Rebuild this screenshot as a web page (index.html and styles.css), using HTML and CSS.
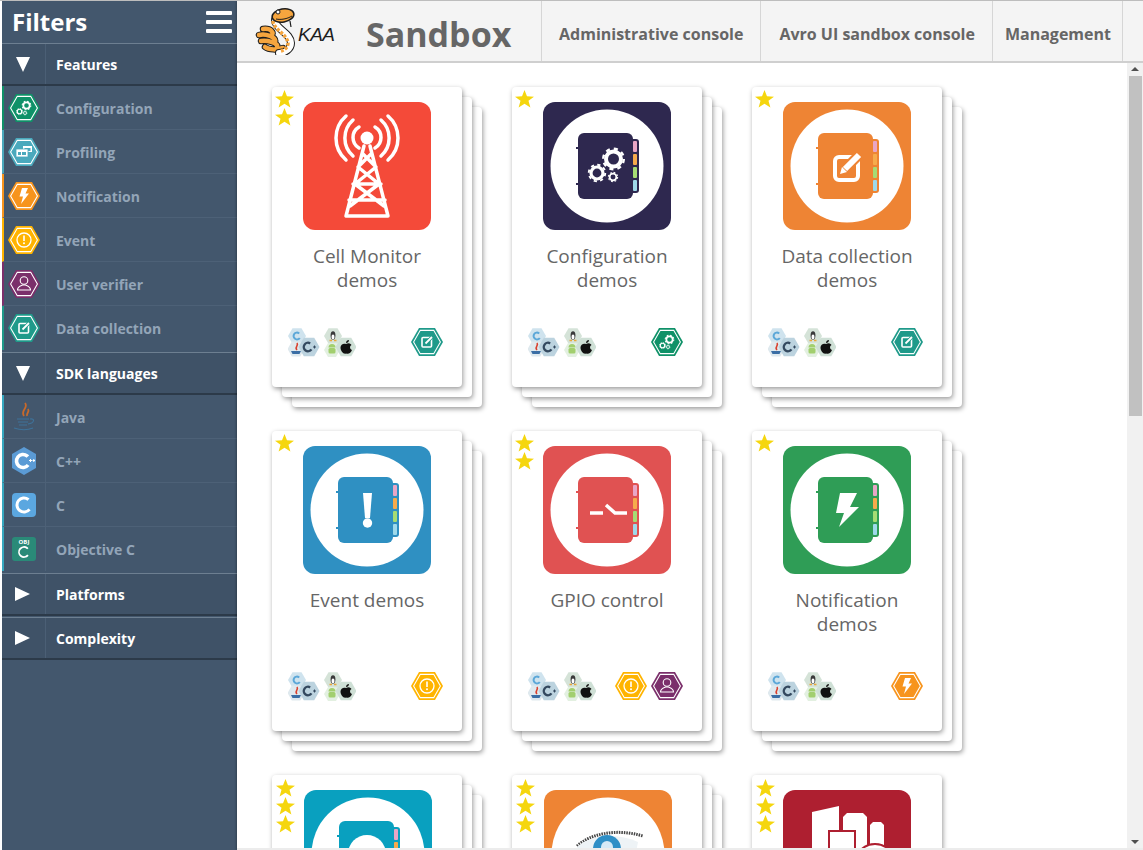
FILE: index.html
```html
<!DOCTYPE html>
<html lang="en">
<head>
  <meta charset="UTF-8" />
  <title>Kaa Sandbox</title>
  <link rel="stylesheet" href="styles.css">
</head>
<body>

  <!-- shared icon parts -->
  <svg class="icon-defs" xmlns="http://www.w3.org/2000/svg">
    <defs>
      <polygon id="hex" points="-1,0 -.5,-.87 .5,-.87 1,0 .5,.87 -.5,.87" />

      <g id="gear" fill="none" stroke="#fff">
        <circle r="7.5" stroke-width="4" />
        <circle r="10.3" stroke-width="2.4" stroke-dasharray="4.05 4.04" />
      </g>

      <g id="notebook">
        <rect width="128" height="128" rx="12" fill="currentColor" />
        <circle cx="64" cy="64" r="56.5" fill="#fff" />
        <rect x="33" y="45" width="4" height="2" fill="currentColor" />
        <rect x="33" y="81" width="4" height="2" fill="currentColor" />
        <rect x="85" y="37" width="11" height="54" rx="3" fill="currentColor" />
        <rect x="35" y="31" width="55" height="66" rx="6" fill="currentColor" />
        <rect x="90" y="39" width="4" height="11" rx="1" fill="#e9a6c6" />
        <rect x="90" y="52" width="4" height="11" rx="1" fill="#f6ab4c" />
        <rect x="90" y="65" width="4" height="11" rx="1" fill="#a6dc74" />
        <rect x="90" y="78" width="4" height="11" rx="1" fill="#9ed9ea" />
      </g>

      <g id="glyph-gears">
        <use href="#gear" transform="translate(70.5 57)" />
        <use href="#gear" transform="translate(54 71) scale(.8)" />
        <use href="#gear" transform="translate(70 75) scale(.45)" />
      </g>

      <g id="glyph-pencil">
        <rect x="52" y="55" width="23" height="23" rx="4" fill="none" stroke="#fff" stroke-width="4" />
        <path d="M60 69 L77 52" stroke="currentColor" stroke-width="10" />
        <path d="M62 67 L76 53" stroke="#fff" stroke-width="6" />
        <path d="M57 72 L59 65 L64 70 Z" fill="#fff" />
      </g>

      <g id="glyph-bolt">
        <polygon fill="#fff" points="57,47 74,47 67,61 76,61 56,81 61,67 53,67" />
      </g>

      <g id="hex-base">
        <use href="#hex" transform="translate(16 14) scale(16)" fill="currentColor" />
        <use href="#hex" transform="translate(16 14) scale(13.4)" fill="none" stroke="#fff" stroke-width=".08" />
      </g>

      <g id="hex-config">
        <use href="#hex-base" />
        <use href="#gear" transform="translate(18.5 11.5) scale(.42)" />
        <use href="#gear" transform="translate(11.5 17.5) scale(.3)" />
        <use href="#gear" transform="translate(17 19) scale(.2)" />
      </g>

      <g id="hex-profile">
        <use href="#hex-base" />
        <rect x="15" y="8" width="9" height="6" fill="#fff" />
        <rect x="16.5" y="10" width="6" height="3" fill="currentColor" />
        <rect x="8" y="11" width="12" height="8" fill="#fff" stroke="currentColor" stroke-width=".8" />
        <rect x="10" y="14" width="3" height="3" fill="currentColor" />
        <rect x="14" y="14" width="4" height="3" fill="currentColor" />
      </g>

      <g id="hex-bolt">
        <use href="#hex-base" />
        <polygon fill="#fff" points="14,6 20,6 17.5,11.5 21,11.5 13,22 15,14.5 11.5,14.5" />
      </g>

      <g id="hex-event">
        <use href="#hex-base" />
        <circle cx="16" cy="14" r="7" fill="none" stroke="#fff" stroke-width="1.3" />
        <rect x="15.2" y="9.5" width="1.6" height="5.5" fill="#fff" />
        <circle cx="16" cy="17.3" r="1" fill="#fff" />
      </g>

      <g id="hex-user">
        <use href="#hex-base" />
        <circle cx="16" cy="10.5" r="3.8" fill="none" stroke="#fff" stroke-width="1.1" />
        <path d="M9.5 20 C9.5 16.5 12.5 16 14.5 15 H17.5 C19.5 16 22.5 16.5 22.5 20 Z" fill="none" stroke="#fff" stroke-width="1.1" />
      </g>

      <g id="hex-data">
        <use href="#hex-base" />
        <rect x="11" y="9.5" width="9.5" height="9.5" rx="1" fill="none" stroke="#fff" stroke-width="1.6" />
        <path d="M14 16 L21.5 8.5" stroke="currentColor" stroke-width="3.4" />
        <path d="M14.5 15.5 L21 9" stroke="#fff" stroke-width="1.8" />
      </g>

      <g id="langs">
        <use href="#hex" transform="translate(9 8) scale(9)" fill="#cfe3ee" />
        <circle cx="9" cy="8" r="3.4" fill="none" stroke="#5ba7d8" stroke-width="2" stroke-dasharray="16 6" transform="rotate(35 9 8)" />
        <use href="#hex" transform="translate(8 21) scale(8.5)" fill="#dfe9ee" />
        <path d="M9 15 C11 18 6 19 9 22" fill="none" stroke="#d9402e" stroke-width="1.6" />
        <path d="M3 23 H13 L11.500 26 H4.500 Z" fill="#3b6ea5" />
        <use href="#hex" transform="translate(21 19) scale(10.5)" fill="#bcd3df" />
        <circle cx="20" cy="19" r="4.2" fill="none" stroke="#34495f" stroke-width="2.4" stroke-dasharray="19 7" transform="rotate(35 20 19)" />
        <path d="M25 19 H28 M26.500 17.500 V20.500" stroke="#34495f" />
        <use href="#hex" transform="translate(45 8) scale(9)" fill="#d5e3d8" />
        <ellipse cx="45" cy="7.500" rx="2.400" ry="4.200" fill="#3a3a3a" />
        <ellipse cx="45" cy="9" rx="1.500" ry="2.400" fill="#fff" />
        <path d="M41.500 12.500 H44 M46 12.500 H48.500" stroke="#e9a83a" stroke-width="1.400" />
        <use href="#hex" transform="translate(44 22) scale(8)" fill="#e3f0e1" />
        <rect x="40.500" y="20" width="7" height="5.500" rx="1.500" fill="#a2cf6e" />
        <path d="M40.500 19.500 A3.500 3.500 0 0 1 47.500 19.500 Z" fill="#a2cf6e" />
        <use href="#hex" transform="translate(58 19) scale(10.500)" fill="#cfe0d6" />
        <path d="M58 16 C61 14 63 16 63.500 17 C61.500 18 61.500 21 64 22 C63 25 60.500 26.500 58 25.500 C55.500 26.500 52.500 23 52.500 19.500 C52.500 16 56 15 58 16 Z M58 15 C58 13 59.500 12 61 12 C61 14 59.500 15 58 15 Z" fill="#111" />
      </g>
    </defs>
  </svg>

  <aside class="sidebar">
    <div class="filters-head">
      <span class="filters-title">Filters</span>
      <span class="burger"><i></i><i></i><i></i></span>
    </div>

    <section class="group group-first">
      <div class="group-head"><span class="head-cell"><i class="tri-down"></i></span><span class="head-label">Features</span></div>
      <ul class="items">
        <li class="item edge-config"><span class="item-cell"><svg class="hex-icon config" viewBox="0 0 32 28"><use href="#hex-config" /></svg></span><span class="item-label">Configuration</span></li>
        <li class="item edge-profile"><span class="item-cell"><svg class="hex-icon profile" viewBox="0 0 32 28"><use href="#hex-profile" /></svg></span><span class="item-label">Profiling</span></li>
        <li class="item edge-notify"><span class="item-cell"><svg class="hex-icon notify" viewBox="0 0 32 28"><use href="#hex-bolt" /></svg></span><span class="item-label">Notification</span></li>
        <li class="item edge-event"><span class="item-cell"><svg class="hex-icon event" viewBox="0 0 32 28"><use href="#hex-event" /></svg></span><span class="item-label">Event</span></li>
        <li class="item edge-user"><span class="item-cell"><svg class="hex-icon user" viewBox="0 0 32 28"><use href="#hex-user" /></svg></span><span class="item-label">User verifier</span></li>
        <li class="item edge-data"><span class="item-cell"><svg class="hex-icon data" viewBox="0 0 32 28"><use href="#hex-data" /></svg></span><span class="item-label">Data collection</span></li>
      </ul>
    </section>

    <section class="group">
      <div class="group-head"><span class="head-cell"><i class="tri-down"></i></span><span class="head-label">SDK languages</span></div>
      <ul class="items">
        <li class="item edge-lang"><span class="item-cell">
          <svg class="lang-icon java" viewBox="0 0 24 30">
            <path d="M13 1 C17 6 8 8 12 14 M16 7 C18 10 14 11 15 14" fill="none" stroke="#c8692a" stroke-width="1.800" />
            <path d="M5 17 H17 M6 20 H16 M7 23 H15 M2 26 C8 28 16 28 21 26 M18 17 C23 16 23 21 16 22" fill="none" stroke="#3e7299" stroke-width="1.200" />
          </svg></span><span class="item-label">Java</span></li>
        <li class="item edge-lang"><span class="item-cell">
          <svg class="lang-icon cpp" viewBox="0 0 26 28">
            <polygon points="13,0 25,7 25,21 13,28 1,21 1,7" fill="#5b9bd5" />
            <circle cx="12" cy="14" r="6.500" fill="none" stroke="#fff" stroke-width="3.600" stroke-dasharray="31 10" transform="rotate(38 12 14)" />
            <path d="M18 13.500 H21 M19.500 12 V15 M21.500 13.500 H24 M22.800 12 V15" stroke="#fff" />
          </svg></span><span class="item-label">C++</span></li>
        <li class="item edge-lang"><span class="item-cell">
          <svg class="lang-icon" viewBox="0 0 24 24">
            <rect width="24" height="24" rx="4" fill="#5ba7e0" />
            <circle cx="12" cy="12" r="7" fill="none" stroke="#fff" stroke-width="3" stroke-dasharray="33 11" transform="rotate(38 12 12)" />
          </svg></span><span class="item-label">C</span></li>
        <li class="item edge-lang"><span class="item-cell">
          <svg class="lang-icon" viewBox="0 0 24 24">
            <rect width="24" height="24" rx="3" fill="#2a8a78" />
            <text x="12" y="7" class="obj-text">OBJ</text>
            <circle cx="12" cy="15" r="5" fill="none" stroke="#fff" stroke-width="1.800" stroke-dasharray="24 8" transform="rotate(38 12 15)" />
          </svg></span><span class="item-label">Objective C</span></li>
      </ul>
    </section>

    <section class="group">
      <div class="group-head"><span class="head-cell"><i class="tri-right"></i></span><span class="head-label">Platforms</span></div>
    </section>
    <section class="group">
      <div class="group-head"><span class="head-cell"><i class="tri-right"></i></span><span class="head-label">Complexity</span></div>
    </section>
  </aside>

  <div class="main">
    <header class="topbar">
      <div class="logo">
        <svg class="snake" viewBox="0 0 42 50">
          <g fill="none" stroke-linecap="round">
            <path d="M8 24 C16 23 20 28 16 31 M4 30 C10 28 22 32 20 37 M6 36 C12 35 24 38 22 42 M10 42 C14 45 22 45 28 43" stroke="#1d1d1d" stroke-width="6.500" />
            <path d="M8 24 C16 23 20 28 16 31 M4 30 C10 28 22 32 20 37 M6 36 C12 35 24 38 22 42 M10 42 C14 45 22 45 28 43" stroke="#f6a53e" stroke-width="4.500" />
            <path d="M20 15 C20 24 36 28 36 38 C36 44 30 48 24 48" stroke="#1d1d1d" stroke-width="8" />
            <path d="M20 15 C20 24 36 28 36 38 C36 44 30 48 24 48" stroke="#fff" stroke-width="6" />
            <path d="M18 16 C18 24 32 29 33 38 C33 42 30 45 26 46" stroke="#f6a53e" stroke-width="3.500" stroke-dasharray="3 1.500" stroke-linecap="butt" />
          </g>
          <ellipse cx="28" cy="10.500" rx="11" ry="6.500" fill="#f6a53e" stroke="#1d1d1d" stroke-width="1.500" transform="rotate(-10 28 10.500)" />
          <circle cx="23" cy="7" r="2" fill="#fff" stroke="#1d1d1d" />
          <path d="M21 14 C26 15 32 14 37 11" fill="none" stroke="#1d1d1d" />
          <path d="M35 16 L36 22" stroke="#1d1d1d" stroke-width="1.200" />
        </svg>
        <span class="kaa">KAA</span>
      </div>
      <h1 class="page-title">Sandbox</h1>
      <nav class="nav">
        <a class="nav-link">Administrative console</a>
        <a class="nav-link nav-link-wide">Avro UI sandbox console</a>
        <a class="nav-link nav-link-last">Management</a>
      </nav>
    </header>

    <div class="content">
      <div class="cards">

        <article class="stack">
          <div class="card">
            <div class="stars"><i></i><i></i></div>
            <svg class="thumb" viewBox="0 0 128 128">
              <rect class="c-red" width="128" height="128" rx="12" />
              <g fill="none" stroke="#fff" stroke-width="3.500" stroke-linecap="round">
                <path d="M56 25 A12.200 12.200 0 0 0 56 46 M72 25 A12.200 12.200 0 0 1 72 46" />
                <path d="M50 18 A24 24 0 0 0 50 54 M78 18 A24 24 0 0 1 78 54" />
                <path d="M43 14 A29.200 29.200 0 0 0 43 58 M85 14 A29.200 29.200 0 0 1 85 58" />
                <path d="M61 44 L43 114 H85 L67 44 M60 52 L73 65 L52 82 L81 104 M68 52 L55 65 L76 82 L47 104 M50 82 H78 M46 98 H82" stroke-linejoin="round" />
              </g>
              <circle cx="64" cy="36" r="6.500" fill="#fff" />
            </svg>
            <h2 class="card-title">Cell Monitor demos</h2>
            <div class="card-foot">
              <svg class="langs" viewBox="0 0 68 30"><use href="#langs" /></svg>
              <div class="features"><svg class="hex-icon data" viewBox="0 0 32 28"><use href="#hex-data" /></svg></div>
            </div>
          </div>
        </article>

        <article class="stack">
          <div class="card">
            <div class="stars"><i></i></div>
            <svg class="thumb c-navy" viewBox="0 0 128 128"><use href="#notebook" /><use href="#glyph-gears" /></svg>
            <h2 class="card-title">Configuration demos</h2>
            <div class="card-foot">
              <svg class="langs" viewBox="0 0 68 30"><use href="#langs" /></svg>
              <div class="features"><svg class="hex-icon config" viewBox="0 0 32 28"><use href="#hex-config" /></svg></div>
            </div>
          </div>
        </article>

        <article class="stack">
          <div class="card">
            <div class="stars"><i></i></div>
            <svg class="thumb c-orange" viewBox="0 0 128 128"><use href="#notebook" /><use href="#glyph-pencil" /></svg>
            <h2 class="card-title">Data collection demos</h2>
            <div class="card-foot">
              <svg class="langs" viewBox="0 0 68 30"><use href="#langs" /></svg>
              <div class="features"><svg class="hex-icon data" viewBox="0 0 32 28"><use href="#hex-data" /></svg></div>
            </div>
          </div>
        </article>

        <article class="stack">
          <div class="card">
            <div class="stars"><i></i></div>
            <svg class="thumb c-blue" viewBox="0 0 128 128">
              <use href="#notebook" />
              <polygon fill="#fff" points="60,47 69,47 67,72 62,72" />
              <circle cx="64.500" cy="77" r="4.700" fill="#fff" />
            </svg>
            <h2 class="card-title">Event demos</h2>
            <div class="card-foot">
              <svg class="langs" viewBox="0 0 68 30"><use href="#langs" /></svg>
              <div class="features"><svg class="hex-icon event" viewBox="0 0 32 28"><use href="#hex-event" /></svg></div>
            </div>
          </div>
        </article>

        <article class="stack">
          <div class="card">
            <div class="stars"><i></i><i></i></div>
            <svg class="thumb c-coral" viewBox="0 0 128 128">
              <use href="#notebook" />
              <path d="M47 67 H60 M63 59 L72 67 H84" fill="none" stroke="#fff" stroke-width="3.500" />
            </svg>
            <h2 class="card-title">GPIO control</h2>
            <div class="card-foot">
              <svg class="langs" viewBox="0 0 68 30"><use href="#langs" /></svg>
              <div class="features">
                <svg class="hex-icon event" viewBox="0 0 32 28"><use href="#hex-event" /></svg>
                <svg class="hex-icon user" viewBox="0 0 32 28"><use href="#hex-user" /></svg>
              </div>
            </div>
          </div>
        </article>

        <article class="stack">
          <div class="card">
            <div class="stars"><i></i></div>
            <svg class="thumb c-green" viewBox="0 0 128 128"><use href="#notebook" /><use href="#glyph-bolt" /></svg>
            <h2 class="card-title">Notification demos</h2>
            <div class="card-foot">
              <svg class="langs" viewBox="0 0 68 30"><use href="#langs" /></svg>
              <div class="features"><svg class="hex-icon notify" viewBox="0 0 32 28"><use href="#hex-bolt" /></svg></div>
            </div>
          </div>
        </article>

        <article class="stack">
          <div class="card">
            <div class="stars stars-three"><i></i><i></i><i></i></div>
            <svg class="thumb thumb-nudge c-teal" viewBox="0 0 128 128">
              <use href="#notebook" />
              <circle cx="63" cy="64" r="19" fill="#fff" />
            </svg>
          </div>
        </article>

        <article class="stack">
          <div class="card">
            <div class="stars stars-three"><i></i><i></i><i></i></div>
            <svg class="thumb thumb-nudge" viewBox="0 0 128 128">
              <rect class="c-orange-fill" width="128" height="128" rx="12" />
              <circle cx="64" cy="64" r="56.500" fill="#fff" />
              <path d="M33 56 C46 44 72 38 99 46" fill="none" stroke="#444" stroke-width="3" stroke-dasharray="1.500 1" />
              <path d="M33 57 C46 45 72 42 94 52 L90 72 H38 Z" fill="#eef3f6" />
              <circle cx="63" cy="59" r="14" fill="#2f8fc6" />
              <circle cx="63" cy="57" r="6" fill="#d5e9f6" />
            </svg>
          </div>
        </article>

        <article class="stack stack-single">
          <div class="card">
            <div class="stars stars-three"><i></i><i></i><i></i></div>
            <svg class="thumb" viewBox="0 0 128 128">
              <rect class="c-wine" width="128" height="128" rx="12" />
              <polygon fill="#fff" points="29,22 56,16 56,128 29,128" />
              <path d="M60 27 V128 H84 V27 L80 23 H64 Z" fill="#fff" />
              <path d="M87 35 V128 H101 V35 L98 32 H90 Z" fill="#fff" />
              <rect x="46" y="41" width="26" height="87" fill="#fff" stroke="#ae1f30" stroke-width="2" />
              <circle cx="92" cy="74" r="20" fill="#fff" stroke="#ae1f30" stroke-width="2" />
            </svg>
          </div>
        </article>

      </div>
      <div class="scrollbar">
        <span class="arrow-up"></span>
        <span class="scroll-thumb"></span>
        <span class="arrow-down"></span>
      </div>
    </div>
  </div>

</body>
</html>
```

FILE: styles.css
```css
* {
  box-sizing: border-box;
}

html, body {
  margin: 0;
  padding: 0;
  height: 100%;
}

body {
  height: 850px;
  overflow: hidden;
  display: flex;
  padding-left: 2px;
  border-top: 1px solid #bdbdbd;
  background: #fff;
  font-family: "Open Sans", sans-serif;
}

.icon-defs {
  display: none;
}

/* sidebar */
.sidebar {
  flex: 0 0 235px;
  background: #43576d;
  color: #fff;
}

.filters-head {
  display: flex;
  justify-content: space-between;
  align-items: center;
  height: 43px;
  padding: 0 5px 1px 10px;
  border-bottom: 1px solid #6d7f91;
}

.filters-title {
  font-size: 24px;
  font-weight: 700;
}

.burger {
  display: flex;
  flex-direction: column;
  gap: 5px;
  width: 26px;
}

.burger i {
  display: block;
  height: 4px;
  border-radius: 1px;
  background: #fff;
}

.group {
  margin-top: 1px;
}

.group-first {
  margin-top: 0;
}

.group-head {
  display: flex;
  height: 43px;
  background: #3f5267;
  border-top: 1px solid #6d7f91;
  border-bottom: 2px solid #2c3a49;
}

.group-first .group-head {
  height: 42px;
  border-top: 0;
}

.head-cell {
  display: flex;
  justify-content: center;
  align-items: center;
  width: 44px;
  border-right: 1px solid #4b5f75;
  padding-right: 2px;
}

.head-label {
  padding-left: 10px;
  line-height: 42px;
  font-size: 14px;
  font-weight: 700;
}

.tri-down {
  width: 0;
  height: 0;
  border-left: 7.5px solid transparent;
  border-right: 7.5px solid transparent;
  border-top: 15px solid #fff;
}

.tri-right {
  width: 0;
  height: 0;
  border-top: 7.5px solid transparent;
  border-bottom: 7.5px solid transparent;
  border-left: 15px solid #fff;
}

.items {
  list-style: none;
  margin: 0;
  padding: 0 0 1px;
}

.item {
  display: flex;
  height: 44px;
  border-left: 2px solid #43576d;
  border-bottom: 1px solid #4d6177;
}

.item:last-child {
  border-bottom: 0;
}

.edge-config { border-left-color: #0f9168; }
.edge-profile { border-left-color: #4aa9bd; }
.edge-notify { border-left-color: #f7941d; }
.edge-event { border-left-color: #ffb400; }
.edge-user { border-left-color: #7b2f6b; }
.edge-data { border-left-color: #1f9a8a; }
.edge-lang { border-left-color: #35a8c0; }

.item-cell {
  display: flex;
  justify-content: center;
  align-items: center;
  width: 42px;
  border-right: 1px solid #4d6177;
  padding-right: 1px;
}

.item-label {
  padding-left: 10px;
  line-height: 46px;
  font-size: 14px;
  font-weight: 700;
  color: #93a5b8;
}

.hex-icon {
  display: block;
  width: 32px;
  height: 28px;
}

.config { color: #0f9168; }
.profile { color: #4aa9bd; }
.notify { color: #f7941d; }
.event { color: #ffb400; }
.user { color: #7b2f6b; }
.data { color: #1f9a8a; }

.lang-icon {
  display: block;
  width: 24px;
  height: 24px;
}

.java {
  height: 30px;
}

.cpp {
  width: 26px;
  height: 28px;
}

.obj-text {
  font-family: "Open Sans", sans-serif;
  font-size: 6px;
  font-weight: 700;
  fill: #fff;
  text-anchor: middle;
}

/* top bar */
.main {
  flex: 1;
  min-width: 0;
  display: flex;
  flex-direction: column;
  box-shadow: -1px 0 2px rgba(0, 0, 0, 0.25);
}

.topbar {
  flex: 0 0 62px;
  display: flex;
  align-items: stretch;
  background: #f4f4f4;
  border-bottom: 2px solid #cfcfcf;
}

.logo {
  display: flex;
  align-items: center;
  width: 129px;
  padding: 0 0 2px 18px;
}

.snake {
  width: 42px;
  height: 50px;
}

.kaa {
  margin: 10px 0 0 1px;
  font-family: "Liberation Sans", sans-serif;
  font-style: italic;
  font-size: 19px;
  color: #1d1d1d;
  letter-spacing: -0.5px;
}

.page-title {
  width: 175px;
  margin: 0;
  padding-top: 6px;
  line-height: 54px;
  font-size: 34px;
  font-weight: 700;
  color: #666;
}

.nav {
  display: flex;
  border-right: 1px solid #d6d6d6;
}

.nav-link {
  padding: 6px 17px 0;
  border-left: 1px solid #d6d6d6;
  line-height: 54px;
  font-size: 16px;
  font-weight: 700;
  color: #666;
}

.nav-link-wide {
  padding-left: 18px;
}

.nav-link-last {
  padding: 6px 11px 0 12px;
}

/* cards */
.content {
  flex: 1;
  min-height: 0;
  display: flex;
  border-bottom: 2px solid #ececec;
}

.cards {
  flex: 1;
  overflow: hidden;
  display: grid;
  grid-template-columns: repeat(3, 190px);
  grid-auto-rows: 300px;
  gap: 44px 50px;
  align-content: start;
  padding: 24px 0 0 35px;
}

.stack {
  position: relative;
}

.stack::before,
.stack::after {
  content: "";
  position: absolute;
  width: 190px;
  height: 300px;
  border-radius: 4px;
  background: #fff;
  box-shadow: 1px 2px 5px rgba(0, 0, 0, 0.4);
}

.stack::before {
  top: 20px;
  left: 20px;
}

.stack::after {
  top: 10px;
  left: 10px;
}

.stack-single::before,
.stack-single::after {
  display: none;
}

.card {
  position: relative;
  z-index: 1;
  height: 300px;
  display: flex;
  flex-direction: column;
  padding: 15px 19px 29px 16px;
  border-radius: 4px;
  background: #fff;
  box-shadow: 1px 2px 5px rgba(0, 0, 0, 0.4);
}

.stars {
  position: absolute;
  top: 3px;
  left: 3px;
  display: flex;
  flex-direction: column;
}

.stars-three {
  top: 4px;
  left: 4px;
}

.stars i {
  display: block;
  width: 19px;
  height: 18px;
  background: #f5d60e;
  clip-path: polygon(50% 0, 63% 35%, 100% 38%, 71% 60%, 81% 97%, 50% 76%, 19% 97%, 29% 60%, 0 38%, 37% 35%);
}

.thumb {
  flex: none;
  display: block;
  width: 128px;
  height: 128px;
  margin-left: 15px;
}

.thumb-nudge {
  margin-left: 16px;
}

.c-navy { color: #2e284f; }
.c-orange { color: #ee8434; }
.c-blue { color: #2f90c2; }
.c-coral { color: #e05252; }
.c-green { color: #2f9d56; }
.c-teal { color: #09a0bf; }
.c-red { fill: #f44a39; }
.c-orange-fill { fill: #ee8434; }
.c-wine { fill: #ae1f30; }

.card-title {
  height: 48px;
  margin: 14px 4px 0 7px;
  padding: 0;
  font-size: 19px;
  font-weight: 400;
  line-height: 24px;
  text-align: center;
  color: #666;
}

.card-foot {
  margin-top: auto;
  display: flex;
  justify-content: space-between;
  align-items: flex-start;
}

.langs {
  display: block;
  width: 68px;
  height: 30px;
}

.features {
  display: flex;
  gap: 4px;
}

/* scrollbar */
.scrollbar {
  flex: 0 0 16px;
  display: flex;
  flex-direction: column;
  align-items: center;
  background: #f1f1f1;
  padding: 4px 0;
}

.arrow-up {
  width: 0;
  height: 0;
  border-left: 4px solid transparent;
  border-right: 4px solid transparent;
  border-bottom: 4px solid #505050;
}

.arrow-down {
  margin-top: auto;
  width: 0;
  height: 0;
  border-left: 4px solid transparent;
  border-right: 4px solid transparent;
  border-top: 4px solid #505050;
}

.scroll-thumb {
  width: 13px;
  height: 340px;
  margin-top: 5px;
  background: #c1c1c1;
}
```
